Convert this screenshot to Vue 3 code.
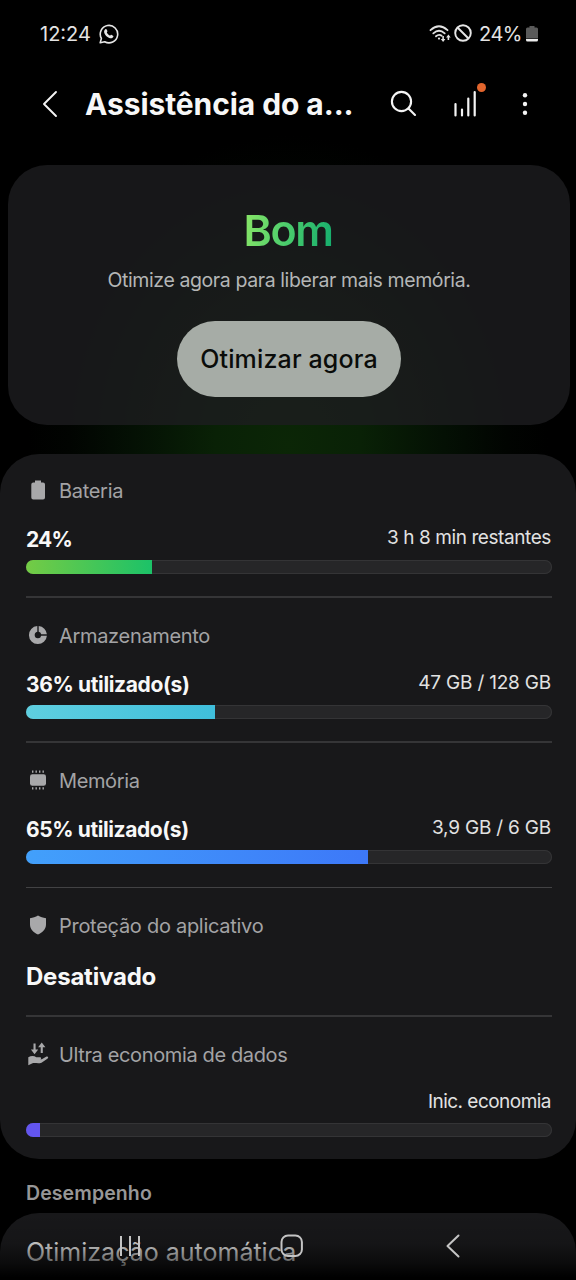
<script setup>
const meters = [
  { id: 'battery', label: 'Bateria', ls: -0.3, value: '24%', vls: -0.8, side: '3 h 8 min restantes', sls: -0.41, fill: 24 },
  { id: 'storage', label: 'Armazenamento', ls: -0.32, value: '36% utilizado(s)', vls: -0.36, side: '47 GB / 128 GB', sls: -0.2, fill: 36 },
  { id: 'memory', label: 'Memória', ls: -0.38, value: '65% utilizado(s)', vls: -0.4, side: '3,9 GB / 6 GB', sls: -0.2, fill: 65 },
]
</script>

<template>
  <div class="screen">
    <header class="status">
      <span class="clock">12:24</span>
      <svg class="wa" width="20" height="20" viewBox="0 0 20 20">
        <path d="M1.2 18.8 2.4 14.4A8.7 8.7 0 1 1 5.7 17.7Z" fill="none" stroke="#e6e6e6" stroke-width="1.6" stroke-linejoin="round" />
        <path d="M6.3 5.3c.5-.5 1.1-.4 1.4.2l.7 1.6c.2.5-.6 1.2-.5 1.6.6 1.2 1.6 2.2 2.9 2.8.5.2 1-.9 1.5-.7l1.7.9c.5.3.5.8.2 1.3-.8 1.3-2.3 1.6-4 .9-2.3-1-4.1-2.800-4.900-5-.4-1.400-.2-2.600 1-3.600Z" fill="#e6e6e6" />
      </svg>
      <span class="grow"></span>
      <svg class="wifi" width="23" height="19" viewBox="0 0 23 19">
        <g fill="none" stroke="#e2e2e2" stroke-width="1.8" stroke-linecap="round">
          <path d="M1.500 6.200Q10 -1.600 18.500 6.200" />
          <path d="M4.300 9.400Q10 4.200 15.700 9.400" />
          <path d="M7 12.300Q10 9.800 12.600 11.800" />
        </g>
        <circle cx="10" cy="14.600" r="1.100" fill="#e2e2e2" />
        <path d="M13.300 12h1.600v3h1.500l-2.300 3-2.300-3h1.500zM18.600 16h1.600v-2.500h1.500L19.400 10.500l-2.300 3h1.500z" fill="#e2e2e2" />
      </svg>
      <svg class="block" width="18" height="18" viewBox="0 0 18 18" fill="none" stroke="#e6e6e6" stroke-width="1.9">
        <circle cx="9" cy="9" r="7.800" /><path d="M3.500 3.500 14.500 14.500" />
      </svg>
      <span class="pct">24%</span>
      <svg class="batt" width="12" height="17" viewBox="0 0 12 17">
        <path d="M3.500 1h5v1.500H10.500a1.500 1.500 0 0 1 1.500 1.500V13.500H0V4a1.500 1.500 0 0 1 1.500-1.500H3.500z" fill="#5a5a5a" />
        <path d="M0 14H12V15a1.500 1.500 0 0 1-1.500 1.500H1.500A1.500 1.500 0 0 1 0 15z" fill="#ededed" />
      </svg>
    </header>

    <div class="bar-top">
      <svg class="back" width="16" height="28" viewBox="0 0 16 28" fill="none" stroke="#f4f4f4" stroke-width="1.900" stroke-linecap="round" stroke-linejoin="round"><path d="M14 2 2 14 14 26" /></svg>
      <h1>Assistência do a...</h1>
      <svg class="search" width="28" height="28" viewBox="0 0 28 28" fill="none" stroke="#f4f4f4" stroke-width="2.100" stroke-linecap="round"><circle cx="11.500" cy="11.500" r="9.600" /><path d="M18.500 18.500 25 25" /></svg>
      <div class="signal">
        <svg width="24" height="28" viewBox="0 0 24 28" fill="none" stroke="#f4f4f4" stroke-width="2.200" stroke-linecap="round"><path d="M2.500 14V25.500M9 19.500V25.500M15.300 8.500V25.500M21.700 2V25.500" /></svg>
        <i class="dot"></i>
      </div>
      <svg class="more" width="6" height="24" viewBox="0 0 6 24" fill="#f4f4f4"><circle cx="3" cy="3.200" r="2.200" /><circle cx="3" cy="12" r="2.200" /><circle cx="3" cy="20.800" r="2.200" /></svg>
    </div>

    <section class="hero">
      <div class="grade">Bom</div>
      <p>Otimize agora para liberar mais memória.</p>
      <button>Otimizar agora</button>
    </section>

    <main class="list">
      <section v-for="m in meters" :key="m.id" class="item" :class="'row-' + m.id">
        <div class="label">
          <svg v-if="m.id === 'battery'" class="ico" viewBox="0 0 24 24"><path d="M9 2.500h6V4.500h2a2 2 0 0 1 2 2V19.500a2 2 0 0 1-2 2H7.300a2 2 0 0 1-2-2V6.500a2 2 0 0 1 2-2H9z" /></svg>
          <svg v-else-if="m.id === 'storage'" class="ico" viewBox="0 0 24 24">
            <path d="M11.300 3.100A9 9 0 1 0 20.900 12.800H15.200A3.300 3.300 0 1 1 11.300 8.800Z" />
            <path d="M12.700 3.100A9 9 0 0 1 20.900 11.300H15.200A3.300 3.300 0 0 0 12.700 8.800Z" />
          </svg>
          <svg v-else class="ico" viewBox="0 0 24 24"><rect x="4" y="6.300" width="16" height="11.400" rx="2.300" /><path d="M6 2.500h1.400v2.300H6zM9.500 2.500h1.400v2.300H9.500zM13 2.500h1.400v2.300H13zM16.500 2.500h1.400v2.300H16.500zM6 19.200h1.400v2.300H6zM9.500 19.200h1.400v2.300H9.500zM13 19.200h1.400v2.300H13zM16.500 19.200h1.400v2.300H16.500z" /></svg>
          <span class="name" :style="{ letterSpacing: m.ls + 'px' }">{{ m.label }}</span>
        </div>
        <div class="values">
          <strong :style="{ letterSpacing: m.vls + 'px' }">{{ m.value }}</strong>
          <span class="side" :style="{ letterSpacing: m.sls + 'px' }">{{ m.side }}</span>
        </div>
        <div class="track"><div class="fill" :class="m.id" :style="{ width: m.fill + '%' }"></div></div>
      </section>

      <section class="item protect">
        <div class="label">
          <svg class="ico" viewBox="0 0 24 24"><path d="M12 2.600C14.500 4.300 17 5 20 5.200V11.500C20 16.200 16.500 19.500 12 21.500 7.500 19.500 4 16.200 4 11.500V5.200C7 5 9.500 4.300 12 2.600Z" /></svg>
          <span class="name l4">Proteção do aplicativo</span>
        </div>
        <div class="state">Desativado</div>
      </section>

      <section class="item data">
        <div class="label">
          <svg class="ico" viewBox="0 0 24 24">
            <path d="M7.500 1.600h2.100V7.600h2.600L8.550 12.300 4.900 7.600h2.600zM14.700 11V5.200h-2.600L15.750.5 19.400 5.200H16.800v5.800z" />
            <path d="M2.300 15.300C5 13.700 8 13.500 10.300 15.300H14c1.500 0 1.500 2 0 2H11.500L15.800 17.200 20.500 14.600C22 14 22.800 15.500 21.700 16.400L15.500 20.700C12 22 8.500 20.300 6 21.500L2.300 23.200Z" />
          </svg>
          <span class="name l5">Ultra economia de dados</span>
        </div>
        <div class="values"><strong></strong><span class="side l6">Inic. economia</span></div>
        <div class="track"><div class="fill saver"></div></div>
      </section>
    </main>

    <h2>Desempenho</h2>
    <section class="next">Otimização automática</section>

    <nav class="nav">
      <svg width="24" height="24" viewBox="0 0 24 24" fill="none" stroke="#c4c4c4" stroke-width="2"><path d="M3 2V22M12 2V22M21 2V22" /></svg>
      <svg width="24" height="24" viewBox="0 0 24 24" fill="none" stroke="#c4c4c4" stroke-width="2"><rect x="1.500" y="1.500" width="20.400" height="20.400" rx="6.500" /></svg>
      <svg width="24" height="24" viewBox="0 0 24 24" fill="none" stroke="#c4c4c4" stroke-width="2" stroke-linecap="round" stroke-linejoin="round"><path d="M17.500 1.500 6.500 12 17.500 22.500" /></svg>
    </nav>
  </div>
</template>

<style>
body { background: #000; }
</style>

<style scoped>
.screen {
  position: relative;
  width: 576px;
  height: 1280px;
  overflow: hidden;
  font-family: Inter, "Liberation Sans", sans-serif;
  color: #f0f0f0;
  background: radial-gradient(ellipse 260px 310px at 288px 445px, #0b2606 0%, #092106 28%, #041004 60%, #010401 84%, #000 100%) #000;
}
.status { display: flex; align-items: center; height: 66px; padding: 0 38px 0 40px; box-sizing: border-box; font-size: 20px; color: #e4e4e4; }
.clock { width: 51px; margin-top: 1px; }
.wa { margin: 2px 0 0 8px; }
.grow { flex: 1; }
.wifi { margin-right: 2px; }
.block { margin-right: 7px; }
.pct { letter-spacing: -0.5px; width: 43px; margin: 1px 4px 0 0; }
.bar-top { display: flex; align-items: center; height: 76px; }
.back { margin-left: 42px; }
h1 { margin: 0 0 0 27px; width: 270px; font-size: 30px; font-weight: 700; line-height: 40px; letter-spacing: -0.08px; color: #f7f7f7; white-space: nowrap; }
.search { margin-left: 35px; }
.signal { position: relative; margin-left: 35px; height: 28px; width: 24px; }
.signal svg { display: block; }
.dot { position: absolute; left: 24px; top: -7px; width: 9px; height: 9px; border-radius: 50%; background: #e2652d; }
.more { margin-left: 45px; }

.hero {
  display: flex; flex-direction: column; align-items: center;
  margin: 23px 6px 0 8px; height: 260px; border-radius: 39px;
  background: rgba(29, 29, 31, 0.8);
}
.grade {
  margin-top: 39px; height: 51px; line-height: 52px; font-size: 43px; font-weight: 600; letter-spacing: -1.4px; padding-right: 2px;
  background: linear-gradient(100deg, #86e467 5%, #4fce6c 45%, #16ae6d 95%);
  -webkit-background-clip: text; background-clip: text; color: transparent;
}
.hero p { margin: 12px 0 0; line-height: 26px; font-size: 19.5px; letter-spacing: -0.4px; color: #b4b6b6; white-space: nowrap; }
.hero button {
  margin-top: 28px; width: 224px; height: 76px; padding: 0 0 0 0; border: 0; border-radius: 38px;
  background: #a6aca6; color: #0a0c0a; font: 500 25px Inter, "Liberation Sans", sans-serif; letter-spacing: 0.15px;
}

.list { margin-top: 29px; padding: 0 24px 0 26px; height: 705px; box-sizing: border-box; border-radius: 39px; background: #18181a; }
.item { height: 145px; box-sizing: border-box; border-bottom: 2px solid #353537; }
.item:first-child { height: 144px; }
.row-memory { border-bottom: 1px solid #424244; }
.label { display: flex; align-items: center; height: 26px; padding-top: 24px; font-size: 20px; color: #a3a3a5; white-space: nowrap; }
.item:first-child .label { padding-top: 23px; }
.ico { width: 24px; height: 24px; margin-right: 9px; fill: #a8a8aa; }
.name { margin-top: 2px; }
.values { display: flex; justify-content: space-between; height: 26px; margin-top: 22px; line-height: 28px; white-space: nowrap; }
strong { font-size: 21px; font-weight: 700; line-height: 30px; color: #f8f8f8; }
.side { margin-right: 1px; font-size: 19px; line-height: 26px; color: #e2e2e2; }
.track { height: 14px; margin-top: 9px; box-sizing: border-box; border-radius: 7px; background: #262628; box-shadow: inset 0 0 0 1px #343436; overflow: hidden; }
.fill { height: 100%; }
.battery { background: linear-gradient(90deg, #74cb45, #1cc268); }
.storage { background: linear-gradient(90deg, #5fcfe0, #3fbedb); }
.memory { background: linear-gradient(90deg, #42a0fb, #3d78f8); }
.saver { width: 14px; background: #6355ee; }
.item.protect { height: 129px; }
.l4 { letter-spacing: -0.28px; }
.state { margin-top: 23px; line-height: 32px; font-size: 24px; font-weight: 700; letter-spacing: -0.22px; color: #f8f8f8; }
.item.data { height: 142px; border: 0; }
.data .track { margin-top: 8px; }
.l5 { letter-spacing: -0.37px; }
.l6 { letter-spacing: -0.53px; }

h2 { margin: 21px 0 0 26px; font-size: 19.5px; line-height: 26px; font-weight: 600; letter-spacing: 0.1px; color: #979797; }
.next { margin-top: 7px; height: 120px; box-sizing: border-box; padding: 22px 26px; border-radius: 39px; background: #18181a; font-size: 25px; line-height: 34px; color: #d8d8d8; }
.nav {
  position: absolute; left: 0; right: 0; bottom: 0; height: 67px; box-sizing: border-box; padding: 0 111px 2px 118px;
  display: flex; justify-content: space-between; align-items: center;
  background: linear-gradient(180deg, rgba(0, 0, 0, 0) 0%, rgba(0, 0, 0, 0.12) 45%, rgba(0, 0, 0, 0.55) 75%, #000 96%);
}
</style>
